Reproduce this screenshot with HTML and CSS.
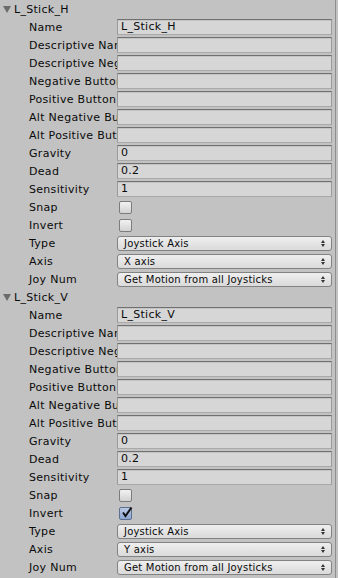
FILE: index.html
```html
<!DOCTYPE html>
<html lang="en">
<head>
  <meta charset="UTF-8" />
  <title>Input Manager</title>
  <link rel="stylesheet" href="styles.css">
</head>
<body>
  <div class="inspector">

    <!-- L_Stick_H -->
    <div class="axis-group">
      <div class="header"><span class="fold"></span>L_Stick_H</div>
      <div class="row"><span class="label">Name</span><div class="field">L_Stick_H</div></div>
      <div class="row"><span class="label">Descriptive Name</span><div class="field"></div></div>
      <div class="row"><span class="label">Descriptive Negative Name</span><div class="field"></div></div>
      <div class="row"><span class="label">Negative Button</span><div class="field"></div></div>
      <div class="row"><span class="label">Positive Button</span><div class="field"></div></div>
      <div class="row"><span class="label">Alt Negative Button</span><div class="field"></div></div>
      <div class="row"><span class="label">Alt Positive Button</span><div class="field"></div></div>
      <div class="row"><span class="label">Gravity</span><div class="field">0</div></div>
      <div class="row"><span class="label">Dead</span><div class="field">0.2</div></div>
      <div class="row"><span class="label">Sensitivity</span><div class="field">1</div></div>
      <div class="row"><span class="label">Snap</span><span class="check"></span></div>
      <div class="row"><span class="label">Invert</span><span class="check"></span></div>
      <div class="row"><span class="label">Type</span><div class="popup">Joystick Axis<span class="arrows"></span></div></div>
      <div class="row"><span class="label">Axis</span><div class="popup">X axis<span class="arrows"></span></div></div>
      <div class="row"><span class="label">Joy Num</span><div class="popup">Get Motion from all Joysticks<span class="arrows"></span></div></div>
    </div>

    <!-- L_Stick_V -->
    <div class="axis-group">
      <div class="header"><span class="fold"></span>L_Stick_V</div>
      <div class="row"><span class="label">Name</span><div class="field">L_Stick_V</div></div>
      <div class="row"><span class="label">Descriptive Name</span><div class="field"></div></div>
      <div class="row"><span class="label">Descriptive Negative Name</span><div class="field"></div></div>
      <div class="row"><span class="label">Negative Button</span><div class="field"></div></div>
      <div class="row"><span class="label">Positive Button</span><div class="field"></div></div>
      <div class="row"><span class="label">Alt Negative Button</span><div class="field"></div></div>
      <div class="row"><span class="label">Alt Positive Button</span><div class="field"></div></div>
      <div class="row"><span class="label">Gravity</span><div class="field">0</div></div>
      <div class="row"><span class="label">Dead</span><div class="field">0.2</div></div>
      <div class="row"><span class="label">Sensitivity</span><div class="field">1</div></div>
      <div class="row"><span class="label">Snap</span><span class="check"></span></div>
      <div class="row"><span class="label">Invert</span>
        <span class="check checked">
          <svg width="13" height="13" viewBox="0 0 13 13"><path d="M3 6.5 L5.5 10 L11.5 1.5" fill="none" stroke="#111" stroke-width="2"/></svg>
        </span>
      </div>
      <div class="row"><span class="label">Type</span><div class="popup">Joystick Axis<span class="arrows"></span></div></div>
      <div class="row"><span class="label">Axis</span><div class="popup">Y axis<span class="arrows"></span></div></div>
      <div class="row"><span class="label">Joy Num</span><div class="popup">Get Motion from all Joysticks<span class="arrows"></span></div></div>
    </div>

  </div>
</body>
</html>
```

FILE: styles.css
```css
body {
  margin: 0;
  background: #c2c2c2;
  font-family: 'DejaVu Sans', sans-serif;
  font-size: 11px;
  letter-spacing: 0.3px;
  color: #0a0a0a;
}

.inspector {
  width: 335px;
  height: 578px;
  border-right: 1px solid #8e8e8e;
  overflow: hidden;
}

.header {
  height: 18px;
  display: flex;
  align-items: center;
  padding-left: 3px;
}

.fold {
  width: 0;
  height: 0;
  border-left: 4px solid transparent;
  border-right: 4px solid transparent;
  border-top: 7px solid #6b6b6b;
  margin-right: 3px;
  margin-top: 1px;
}

.row {
  height: 18px;
  display: flex;
  align-items: center;
}

.label {
  box-sizing: border-box;
  width: 117px;
  padding-left: 29px;
  white-space: nowrap;
  overflow: hidden;
  flex-shrink: 0;
}

.field {
  box-sizing: border-box;
  flex: 1;
  height: 16px;
  margin-right: 3px;
  padding-left: 3px;
  line-height: 14px;
  background: #d6d6d6;
  border: 1px solid #9a9a9a;
  border-top-color: #707070;
  border-bottom-color: #a9a9a9;
  box-shadow: inset 0 1px 0 #c4c4c4;
  white-space: nowrap;
  overflow: hidden;
}

.check {
  box-sizing: border-box;
  width: 13px;
  height: 13px;
  margin-left: 2px;
  border: 1px solid #7c7c7c;
  border-radius: 2px;
  background: linear-gradient(#f2f2f2, #d2d2d2);
  position: relative;
}

.check.checked {
  background: linear-gradient(#b9c9e6, #8ea6d2);
  border-color: #5d6f8e;
}

.check svg {
  position: absolute;
  left: 0;
  top: -2px;
}

.popup {
  box-sizing: border-box;
  flex: 1;
  height: 15px;
  margin-right: 3px;
  padding-left: 6px;
  font-size: 10px;
  letter-spacing: 0.2px;
  line-height: 13px;
  border: 1px solid #828282;
  border-radius: 3px;
  background: linear-gradient(#efefef, #dadada);
  position: relative;
  white-space: nowrap;
}

.arrows {
  position: absolute;
  right: 6px;
  top: 3px;
  width: 0;
  height: 0;
  border-left: 2px solid transparent;
  border-right: 2px solid transparent;
  border-bottom: 3px solid #333;
}

.arrows::after {
  content: '';
  position: absolute;
  left: -2px;
  top: 4px;
  width: 0;
  height: 0;
  border-left: 2px solid transparent;
  border-right: 2px solid transparent;
  border-top: 3px solid #333;
}
```
